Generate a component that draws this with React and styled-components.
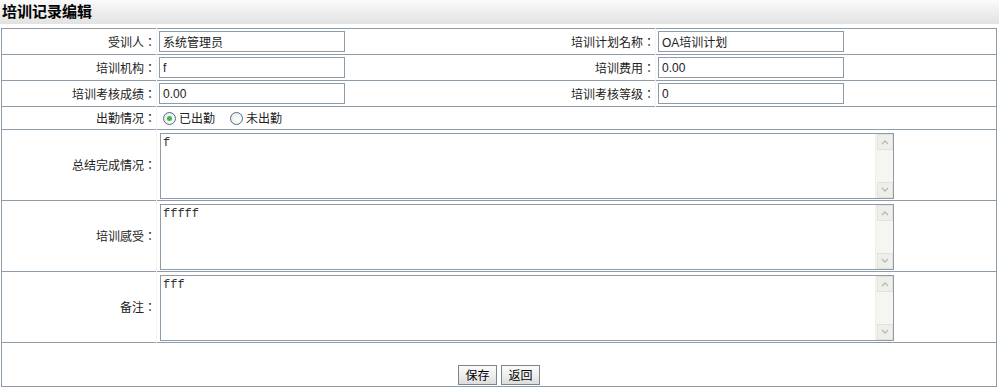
import React, { useState } from 'react'
import styled, { createGlobalStyle } from 'styled-components';

const GlobalStyle = createGlobalStyle`
  body {
    margin: 0;
    background: #ffffff;
    font-family: "Noto Sans CJK SC", "Liberation Sans", sans-serif;
    font-size: 12px;
    color: #222222;
  }
`;

const TitleBar = styled.div`
  height: 24px;
  margin-bottom: 4px;
  padding-left: 2px;
  background: linear-gradient(to bottom, #fbfbfb 0%, #f0f0f0 40%, #e2e2e2 100%);
  font-size: 15px;
  font-weight: bold;
  line-height: 22px;
  color: #000000;
`;

const FormTable = styled.table`
  margin-left: 1px;
  width: 996px;
  border-collapse: collapse;
  table-layout: fixed;
  border: 1px solid #8e9ba8;
  td {
    border-top: 1px solid #8e9ba8;
    padding: 0;
    vertical-align: middle;
  }
`;

const Label = styled.td`
  text-align: right;
  padding-right: 0 !important;
  font-family: "Noto Sans CJK TC", "Noto Sans CJK SC", sans-serif;
  line-height: 16px;
  white-space: nowrap;
  border-right: 1px solid #f4f4f4;
`;

const Value = styled.td`
  padding-left: 2px !important;
`;

const Row = styled.tr`
  height: ${p => p.h}px;
`;

const TextInput = styled.input`
  box-sizing: border-box;
  width: 186px;
  height: 21px;
  border: 1px solid #8e9ba8;
  padding: 0 3px;
  font-family: "Liberation Sans", "Noto Sans CJK SC", sans-serif;
  font-size: 12px;
  color: #222222;
  display: block;
  outline: none;
`;

const RadioGroup = styled.div`
  display: flex;
  align-items: center;
  padding-left: 4px;
  line-height: 16px;
`;

const RadioOption = styled.label`
  display: flex;
  align-items: center;
  gap: 3px;
  margin-right: 15px;
  cursor: pointer;
`;

const RadioDot = styled.span`
  box-sizing: border-box;
  width: 13px;
  height: 13px;
  border-radius: 50%;
  border: 1px solid #4f6d8e;
  background: radial-gradient(circle at 60% 60%, #ffffff 0%, #e4e4de 100%);
  display: flex;
  align-items: center;
  justify-content: center;
  &::after {
    content: '';
    width: 5px;
    height: 5px;
    border-radius: 50%;
    background: ${p => (p.checked ? '#3fb54a' : 'transparent')};
  }
`;

const AreaBox = styled.div`
  box-sizing: border-box;
  width: 734px;
  height: 66px;
  margin: 3px 0 1px 1px;
  border: 1px solid #8e9ba8;
  display: flex;
  background: #ffffff;
`;

const TextArea = styled.textarea`
  flex: 1;
  border: 0;
  resize: none;
  outline: none;
  padding: 2px 2px;
  font-family: "Liberation Mono", "Noto Sans CJK SC", monospace;
  font-size: 12px;
  line-height: 14px;
  color: #333333;
  background: transparent;
`;

const ScrollTrack = styled.div`
  width: 17px;
  display: flex;
  flex-direction: column;
  justify-content: space-between;
  background: #f5f5f1;
  border-left: 1px solid #efefea;
`;

const ScrollArrow = styled.div`
  box-sizing: border-box;
  width: 16px;
  height: 16px;
  margin-left: 1px;
  border: 1px solid #e2e2dc;
  background: #efefea;
  display: flex;
  align-items: center;
  justify-content: center;
`;

const ButtonBar = styled.div`
  display: flex;
  justify-content: center;
  gap: 4px;
  padding-top: 22px;
  padding-bottom: 1px;
`;

const Button = styled.button`
  box-sizing: border-box;
  width: 39px;
  height: 20px;
  padding: 0;
  border: 1px solid #7a8592;
  background: linear-gradient(to bottom, #fbfbfb 0%, #ececec 60%, #dcdcdc 100%);
  font-family: "Noto Sans CJK SC", sans-serif;
  font-size: 12px;
  line-height: 18px;
  color: #000000;
  cursor: pointer;
`;

const Chevron = ({ up }) => (
  <svg width="8" height="6" viewBox="0 0 8 6">
    <path d={up ? 'M1 5 L4 2 L7 5' : 'M1 1 L4 4 L7 1'} fill="none" stroke="#b9b9b3" strokeWidth="1.3" />
  </svg>
);

const Area = ({ value }) => (
  <AreaBox>
    <TextArea defaultValue={value} />
    <ScrollTrack>
      <ScrollArrow><Chevron up /></ScrollArrow>
      <ScrollArrow><Chevron /></ScrollArrow>
    </ScrollTrack>
  </AreaBox>
);

const App = () => {
  const [attend, setAttend] = useState(true);
  return (
    <>
      <GlobalStyle />
      <TitleBar>培训记录编辑</TitleBar>
      <FormTable>
        <colgroup>
          <col style={{ width: 155 }} />
          <col style={{ width: 297 }} />
          <col style={{ width: 202 }} />
          <col />
        </colgroup>
        <tbody>
          <Row h={26}>
            <Label>受训人：</Label>
            <Value><TextInput defaultValue="系统管理员" /></Value>
            <Label>培训计划名称：</Label>
            <Value><TextInput defaultValue="OA培训计划" /></Value>
          </Row>
          <Row h={26}>
            <Label>培训机构：</Label>
            <Value><TextInput defaultValue="f" /></Value>
            <Label>培训费用：</Label>
            <Value><TextInput defaultValue="0.00" /></Value>
          </Row>
          <Row h={26}>
            <Label>培训考核成绩：</Label>
            <Value><TextInput defaultValue="0.00" /></Value>
            <Label>培训考核等级：</Label>
            <Value><TextInput defaultValue="0" /></Value>
          </Row>
          <Row h={23}>
            <Label>出勤情况：</Label>
            <Value colSpan={3}>
              <RadioGroup>
                <RadioOption onClick={() => setAttend(true)}>
                  <RadioDot checked={attend} />已出勤
                </RadioOption>
                <RadioOption onClick={() => setAttend(false)}>
                  <RadioDot checked={!attend} />未出勤
                </RadioOption>
              </RadioGroup>
            </Value>
          </Row>
          <Row h={70}>
            <Label>总结完成情况：</Label>
            <Value colSpan={3}><Area value="f" /></Value>
          </Row>
          <Row h={70}>
            <Label>培训感受：</Label>
            <Value colSpan={3}><Area value="fffff" /></Value>
          </Row>
          <Row h={70}>
            <Label>备注：</Label>
            <Value colSpan={3}><Area value="fff" /></Value>
          </Row>
          <tr>
            <td colSpan={4}>
              <ButtonBar>
                <Button>保存</Button>
                <Button>返回</Button>
              </ButtonBar>
            </td>
          </tr>
        </tbody>
      </FormTable>
    </>
  )
}

export default App;
